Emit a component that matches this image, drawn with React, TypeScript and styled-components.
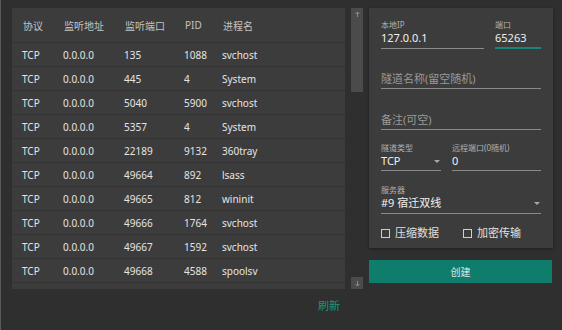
import React from "react";
import styled, { createGlobalStyle } from "styled-components";

const Global = createGlobalStyle`
  html, body { margin: 0; padding: 0; background: #2f2f2f; }
  body { font-family: "Noto Sans", "Noto Sans CJK SC", sans-serif; }
  * { box-sizing: border-box; }
`;

const Screen = styled.div`
  width: 562px;
  height: 330px;
  background: #2f2f2f;
  border-left: 1px solid #5a5a5a;
  overflow: hidden;
  display: flex;
  gap: 6px;
  padding: 8px 0 0 11px;
`;

const LeftCol = styled.div`
  display: flex;
  flex-direction: column;
`;

const TableRow = styled.div`
  display: flex;
  gap: 6px;
`;

const Table = styled.div`
  width: 333px;
  height: 281px;
  background: #3c3c3c;
  overflow: hidden;
`;

const cols = "41px 61px 60px 38px 1fr";

const HeadRow = styled.div`
  display: grid;
  grid-template-columns: ${cols};
  padding-left: 11px;
  height: 35px;
  align-items: center;
  border-bottom: 1px solid #343434;
  font-size: 10px;
  color: #c4c4c4;
`;

const DataRow = styled.div`
  display: grid;
  grid-template-columns: ${cols};
  padding-left: 10px;
  height: 24px;
  align-items: center;
  border-bottom: 1px solid #343434;
  font-size: 10px;
  color: #e4e4e4;
`;

const Scrollbar = styled.div`
  width: 12px;
  height: 281px;
  display: flex;
  flex-direction: column;
`;

const ScrollBtn = styled.div`
  height: 12px;
  background: #4b4b4b;
  display: flex;
  align-items: center;
  justify-content: center;
`;

const Thumb = styled.div`
  height: 72px;
  background: #4b4b4b;
`;

const Spacer = styled.div`
  flex: 1;
`;

const RefreshRow = styled.div`
  width: 333px;
  display: flex;
  justify-content: flex-end;
  padding-right: 5px;
  margin-top: 9px;
`;

const Refresh = styled.span`
  font-size: 11px;
  line-height: 16px;
  color: #1a9480;
`;

const RightCol = styled.div`
  width: 184px;
  display: flex;
  flex-direction: column;
  gap: 12px;
`;

const Panel = styled.div`
  background: #3c3c3c;
  height: 240px;
  padding: 12px 12px 0 12px;
  display: flex;
  flex-direction: column;
  box-shadow: 0 1px 3px rgba(0, 0, 0, 0.35);
`;

const FieldRow = styled.div<{ $mt?: number; $cols?: string }>`
  display: grid;
  grid-template-columns: ${(p) => p.$cols || "1fr"};
  column-gap: 11px;
  margin-top: ${(p) => p.$mt || 0}px;
`;

const Field = styled.div<{ $focus?: boolean; $pb?: number }>`
  display: flex;
  flex-direction: column;
  padding-bottom: ${(p) => (p.$pb ?? 1) - (p.$focus ? 1 : 0)}px;
  border-bottom: ${(p) => (p.$focus ? "2px solid #17857a" : "1px solid #8a8a8a")};
`;

const Label = styled.div`
  font-size: 8px;
  line-height: 10px;
  color: #b0b0b0;
  white-space: nowrap;
`;

const Value = styled.div<{ $placeholder?: boolean }>`
  font-size: 11px;
  line-height: 16px;
  color: ${(p) => (p.$placeholder ? "#9a9a9a" : "#f0f0f0")};
  display: flex;
  justify-content: space-between;
  align-items: center;
  white-space: nowrap;
`;

const Caret = styled.span`
  width: 0;
  height: 0;
  border-left: 3px solid transparent;
  border-right: 3px solid transparent;
  border-top: 3px solid #a8a8a8;
  margin-right: 1px;
`;

const CheckRow = styled.div`
  display: grid;
  grid-template-columns: 82px auto;
  margin-top: 11px;
`;

const Check = styled.label`
  display: flex;
  align-items: center;
  gap: 5px;
  font-size: 11px;
  line-height: 16px;
  color: #e0e0e0;
`;

const Box = styled.span`
  width: 9px;
  height: 9px;
  border: 1px solid #cfcfcf;
`;

const CreateBtn = styled.div`
  height: 23px;
  background: #0f7d6c;
  color: #e4e4e4;
  font-size: 10px;
  display: flex;
  align-items: center;
  justify-content: center;
  width: 183px;
`;

const rows = [
  ["TCP", "0.0.0.0", "135", "1088", "svchost"],
  ["TCP", "0.0.0.0", "445", "4", "System"],
  ["TCP", "0.0.0.0", "5040", "5900", "svchost"],
  ["TCP", "0.0.0.0", "5357", "4", "System"],
  ["TCP", "0.0.0.0", "22189", "9132", "360tray"],
  ["TCP", "0.0.0.0", "49664", "892", "lsass"],
  ["TCP", "0.0.0.0", "49665", "812", "wininit"],
  ["TCP", "0.0.0.0", "49666", "1764", "svchost"],
  ["TCP", "0.0.0.0", "49667", "1592", "svchost"],
  ["TCP", "0.0.0.0", "49668", "4588", "spoolsv"],
];

const Arrow = ({ up }: { up?: boolean }) => (
  <svg width="7" height="7" viewBox="0 0 7 7">
    <path
      d={up ? "M3.5 6V1M1.5 3L3.5 1L5.5 3" : "M3.5 1V6M1.5 4L3.5 6L5.5 4"}
      stroke="#8c8c8c"
      strokeWidth="1"
      fill="none"
    />
  </svg>
);

export default function App() {
  return (
    <>
      <Global />
      <Screen>
        <LeftCol>
          <TableRow>
            <Table>
              <HeadRow>
                <span>协议</span>
                <span>监听地址</span>
                <span>监听端口</span>
                <span>PID</span>
                <span>进程名</span>
              </HeadRow>
              {rows.map((r, i) => (
                <DataRow key={i}>
                  {r.map((c, j) => (
                    <span key={j}>{c}</span>
                  ))}
                </DataRow>
              ))}
            </Table>
            <Scrollbar>
              <ScrollBtn>
                <Arrow up />
              </ScrollBtn>
              <Thumb />
              <Spacer />
              <ScrollBtn>
                <Arrow />
              </ScrollBtn>
            </Scrollbar>
          </TableRow>
          <RefreshRow>
            <Refresh>刷新</Refresh>
          </RefreshRow>
        </LeftCol>
        <RightCol>
          <Panel>
            <FieldRow $cols="103px 46px">
              <Field $pb={2}>
                <Label>本地IP</Label>
                <Value>127.0.0.1</Value>
              </Field>
              <Field $pb={2} $focus>
                <Label>端口</Label>
                <Value>65263</Value>
              </Field>
            </FieldRow>
            <FieldRow $mt={22}>
              <Field>
                <Value $placeholder>隧道名称(留空随机)</Value>
              </Field>
            </FieldRow>
            <FieldRow $mt={23}>
              <Field>
                <Value $placeholder>备注(可空)</Value>
              </Field>
            </FieldRow>
            <FieldRow $mt={13} $cols="60px 89px">
              <Field>
                <Label>隧道类型</Label>
                <Value>
                  TCP
                  <Caret />
                </Value>
              </Field>
              <Field>
                <Label>远程端口(0随机)</Label>
                <Value>0</Value>
              </Field>
            </FieldRow>
            <FieldRow $mt={14}>
              <Field $pb={2}>
                <Label>服务器</Label>
                <Value>
                  #9 宿迁双线
                  <Caret />
                </Value>
              </Field>
            </FieldRow>
            <CheckRow>
              <Check>
                <Box />
                压缩数据
              </Check>
              <Check>
                <Box />
                加密传输
              </Check>
            </CheckRow>
          </Panel>
          <CreateBtn>创建</CreateBtn>
        </RightCol>
      </Screen>
    </>
  );
}
